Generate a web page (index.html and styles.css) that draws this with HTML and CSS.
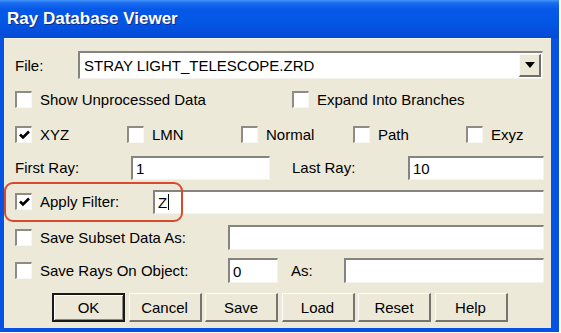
FILE: index.html
```html
<!DOCTYPE html>
<html lang="en">
<head>
  <meta charset="UTF-8">
  <title>Ray Database Viewer</title>
  <link rel="stylesheet" href="styles.css">
</head>
<body>
  <div class="window">
    <div class="titlebar"><span class="title">Ray Database Viewer</span></div>

    <div class="client">
      <div class="row">
        <span class="lbl w-file">File:</span>
        <div class="combo">
          <span class="combo-text">STRAY LIGHT_TELESCOPE.ZRD</span>
          <span class="combo-btn">
            <svg width="10" height="6" viewBox="0 0 10 6"><path d="M0 0H10L5 6Z" fill="#000"/></svg>
          </span>
        </div>
      </div>

      <div class="row">
        <label class="check w-half"><span class="box"></span>Show Unprocessed Data</label>
        <label class="check"><span class="box"></span>Expand Into Branches</label>
      </div>

      <div class="row">
        <label class="check w-c1"><span class="box"><svg class="tick" width="11" height="10" viewBox="0 0 11 10"><path d="M1 4.5L4 7.5L10 1.5" fill="none" stroke="#000" stroke-width="2.6"/></svg></span>XYZ</label>
        <label class="check w-c2"><span class="box"></span>LMN</label>
        <label class="check w-c3"><span class="box"></span>Normal</label>
        <label class="check w-c4"><span class="box"></span>Path</label>
        <label class="check"><span class="box"></span>Exyz</label>
      </div>

      <div class="row">
        <span class="lbl w-ray">First Ray:</span>
        <span class="field f-first">1</span>
        <span class="lbl w-ray gap-last">Last Ray:</span>
        <span class="field f-last">10</span>
      </div>

      <div class="row">
        <label class="check w-filter"><span class="box"><svg class="tick" width="11" height="10" viewBox="0 0 11 10"><path d="M1 4.5L4 7.5L10 1.5" fill="none" stroke="#000" stroke-width="2.6"/></svg></span>Apply Filter:</label>
        <span class="field f-filter">Z<span class="caret"></span></span>
      </div>

      <div class="row">
        <label class="check w-save"><span class="box"></span>Save Subset Data As:</label>
        <span class="field f-subset"></span>
      </div>

      <div class="row">
        <label class="check w-save"><span class="box"></span>Save Rays On Object:</label>
        <span class="field f-object">0</span>
        <span class="lbl w-as">As:</span>
        <span class="field f-as"></span>
      </div>

      <div class="buttons">
        <button class="btn btn-default">OK</button>
        <button class="btn">Cancel</button>
        <button class="btn">Save</button>
        <button class="btn">Load</button>
        <button class="btn">Reset</button>
        <button class="btn">Help</button>
      </div>
    </div>

    <div class="annot"></div>
  </div>
</body>
</html>
```

FILE: styles.css
```css
body {
  margin: 0;
  background: #fff;
  font-family: "Liberation Sans", Arial, sans-serif;
  font-size: 15px;
  color: #000;
}
.window {
  position: relative;
  width: 559px;
  height: 332px;
  display: flex;
  flex-direction: column;
  background: #0553e2;
}
.titlebar {
  height: 38px;
  flex: none;
  display: flex;
  align-items: center;
  padding-left: 7px;
  background: linear-gradient(#4595fa 0, #1a6cf0 3px, #0659e8 9px, #0355e3 24px, #0449d4 38px);
}
.title {
  color: #fff;
  font-weight: bold;
  font-size: 17px;
  text-shadow: 1px 1px 0 #0b2c8c;
}
.client {
  flex: 1;
  margin: 0 8px 4px 4px;
  background: #ece9d8;
  border-top: 1px solid #f3f1e6;
  padding: 9px 0 0 11px;
  display: grid;
  grid-template-rows: 34px 34px 36px 31px 37px 34px 33px auto;
}
.row {
  display: flex;
  align-items: center;
}
.lbl, .check {
  flex: none;
  white-space: nowrap;
}
.check {
  display: flex;
  align-items: center;
}
.box {
  width: 17px;
  height: 17px;
  box-sizing: border-box;
  margin-right: 8px;
  border-style: solid;
  border-width: 2px 1px 1px 2px;
  border-color: #8e8c85 #f8f7f2 #f8f7f2 #8e8c85;
  background: #fff;
  display: flex;
  align-items: center;
  justify-content: center;
}

/* column widths */
.w-file { width: 63px; }
.w-half { width: 277px; }
.w-c1 { width: 112px; }
.w-c2 { width: 114px; }
.w-c3 { width: 112px; }
.w-c4 { width: 113px; }
.w-ray { width: 116px; }
.gap-last { margin-left: 22px; }
.w-filter { width: 138px; }
.w-save { width: 213px; }
.w-as { width: 53px; margin-left: 13px; }

/* text fields */
.field {
  flex: none;
  box-sizing: border-box;
  height: 24px;
  display: flex;
  align-items: center;
  padding-left: 3px;
  background: #fff;
  border-style: solid;
  border-width: 2px 1px 1px 2px;
  border-color: #85847e #f4f3ee #f4f3ee #85847e;
}
.f-first { width: 139px; }
.f-last { width: 136px; }
.f-filter { width: 391px; }
.f-subset { width: 316px; height: 25px; }
.f-object { width: 50px; height: 25px; }
.f-as { width: 200px; height: 25px; }
.caret {
  width: 1px;
  height: 16px;
  margin-left: 1px;
  background: #000;
}

/* combo box */
.combo {
  width: 465px;
  height: 28px;
  box-sizing: border-box;
  display: flex;
  align-items: center;
  background: #fff;
  border-style: solid;
  border-width: 2px 1px 1px 2px;
  border-color: #85847e #f4f3ee #f4f3ee #85847e;
  padding: 0 1px 0 4px;
}
.combo-text {
  flex: 1;
}
.combo-btn {
  width: 22px;
  height: 23px;
  box-sizing: border-box;
  display: flex;
  align-items: center;
  justify-content: center;
  background: #ece9d8;
  border-style: solid;
  border-width: 1px 2px 2px 1px;
  border-color: #fbfaf6 #6f6e68 #6f6e68 #fbfaf6;
}

/* buttons */
.buttons {
  display: flex;
  gap: 3.5px;
  padding: 6px 0 0 37px;
  align-items: flex-start;
}
.btn {
  width: 73px;
  height: 29px;
  box-sizing: border-box;
  padding: 0;
  font: inherit;
  color: #000;
  background: #ece9d8;
  border-style: solid;
  border-width: 1px 2px 2px 1px;
  border-color: #fff #76746d #76746d #fff;
}
.btn-default {
  border: 2px solid #1a1a1a;
  box-shadow: inset 1px 1px 0 #fff, inset -1px -1px 0 #8a887f;
}

/* red annotation */
.annot {
  position: absolute;
  left: 4px;
  top: 182px;
  width: 179px;
  height: 40px;
  box-sizing: border-box;
  border: 2px solid #d94a2c;
  border-radius: 9px;
}
```
